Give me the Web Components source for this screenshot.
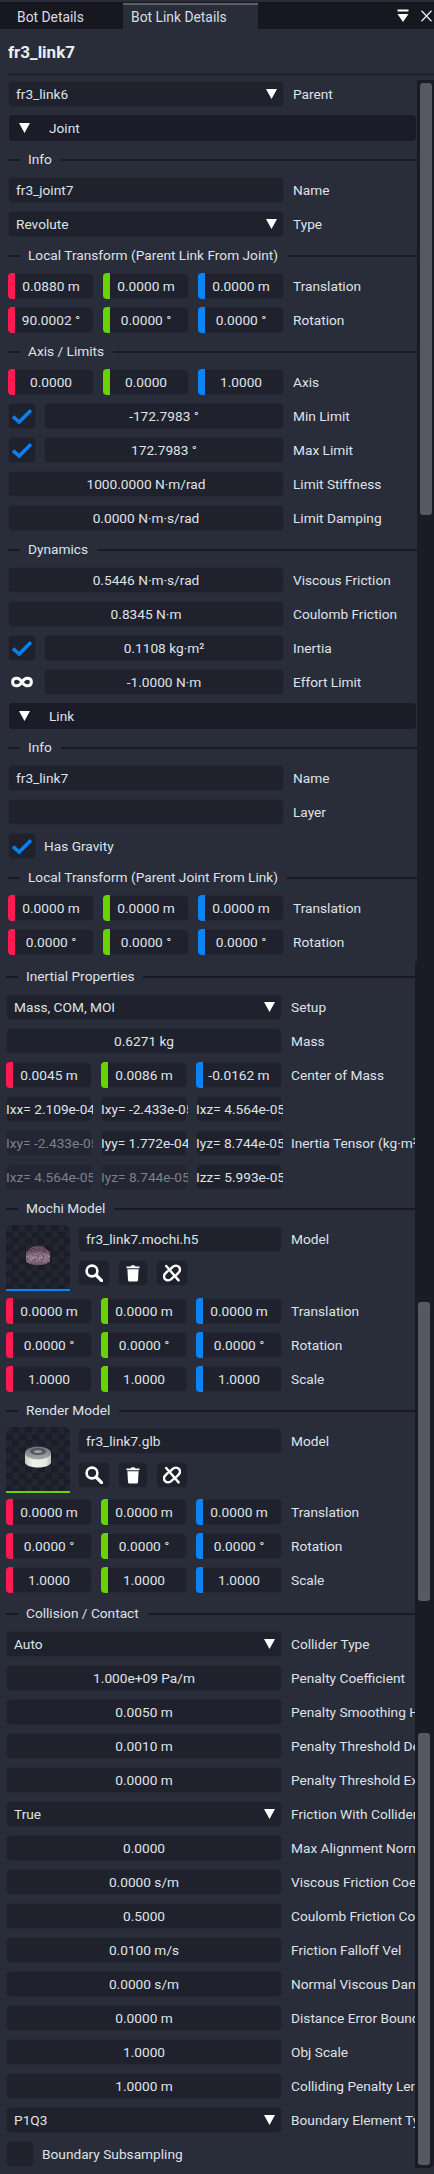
<!DOCTYPE html>
<html>
<head>
<meta charset="utf-8">
<title>Bot Link Details</title>
<style>
  html, body { margin: 0; padding: 0; background: #292c39; }
  body { width: 434px; height: 2174px; overflow: hidden; font-family: Roboto, "Liberation Sans", sans-serif; font-size: 13.7px; color: #dfe2e8; }
</style>
</head>
<body>
<bot-tabs></bot-tabs>
<bot-title>fr3_link7</bot-title>

<bot-pane left="8" track="17" thumbs="3:432" top="1" height="882">
  <bot-row label="Parent"><bot-select>fr3_link6</bot-select></bot-row>
  <bot-fold>Joint</bot-fold>
  <bot-section>Info</bot-section>
  <bot-row label="Name"><bot-field left>fr3_joint7</bot-field></bot-row>
  <bot-row label="Type"><bot-select>Revolute</bot-select></bot-row>
  <bot-section>Local Transform (Parent Link From Joint)</bot-section>
  <bot-row label="Translation"><bot-vec values="0.0880 m|0.0000 m|0.0000 m"></bot-vec></bot-row>
  <bot-row label="Rotation"><bot-vec values="90.0002 °|0.0000 °|0.0000 °"></bot-vec></bot-row>
  <bot-section>Axis / Limits</bot-section>
  <bot-row label="Axis"><bot-vec values="0.0000|0.0000|1.0000"></bot-vec></bot-row>
  <bot-row label="Min Limit"><bot-check checked>-172.7983 °</bot-check></bot-row>
  <bot-row label="Max Limit"><bot-check checked>172.7983 °</bot-check></bot-row>
  <bot-row label="Limit Stiffness"><bot-field>1000.0000 N·m/rad</bot-field></bot-row>
  <bot-row label="Limit Damping"><bot-field>0.0000 N·m·s/rad</bot-field></bot-row>
  <bot-section>Dynamics</bot-section>
  <bot-row label="Viscous Friction"><bot-field>0.5446 N·m·s/rad</bot-field></bot-row>
  <bot-row label="Coulomb Friction"><bot-field>0.8345 N·m</bot-field></bot-row>
  <bot-row label="Inertia"><bot-check checked>0.1108 kg·m²</bot-check></bot-row>
  <bot-row label="Effort Limit"><bot-check infinite>-1.0000 N·m</bot-check></bot-row>
  <bot-fold>Link</bot-fold>
  <bot-section>Info</bot-section>
  <bot-row label="Name"><bot-field left>fr3_link7</bot-field></bot-row>
  <bot-row label="Layer"><bot-field left></bot-field></bot-row>
  <bot-toggle checked>Has Gravity</bot-toggle>
  <bot-section>Local Transform (Parent Joint From Link)</bot-section>
  <bot-row label="Translation"><bot-vec values="0.0000 m|0.0000 m|0.0000 m"></bot-vec></bot-row>
  <bot-row label="Rotation"><bot-vec values="0.0000 °|0.0000 °|0.0000 °"></bot-vec></bot-row>
</bot-pane>

<bot-pane left="6" track="19" thumbs="340:299,132:432" top="4" height="1206" last>
  <bot-section>Inertial Properties</bot-section>
  <bot-row label="Setup"><bot-select>Mass, COM, MOI</bot-select></bot-row>
  <bot-row label="Mass"><bot-field>0.6271 kg</bot-field></bot-row>
  <bot-row label="Center of Mass"><bot-vec values="0.0045 m|0.0086 m|-0.0162 m"></bot-vec></bot-row>
  <bot-row><bot-tensor values="Ixx= 2.109e-04|Ixy= -2.433e-05|Ixz= 4.564e-05"></bot-tensor></bot-row>
  <bot-row label="Inertia Tensor (kg·m²)"><bot-tensor dim="0" values="Ixy= -2.433e-05|Iyy= 1.772e-04|Iyz= 8.744e-05"></bot-tensor></bot-row>
  <bot-row><bot-tensor dim="0,1" values="Ixz= 4.564e-05|Iyz= 8.744e-05|Izz= 5.993e-05"></bot-tensor></bot-row>
  <bot-section>Mochi Model</bot-section>
  <bot-model file="fr3_link7.mochi.h5" kind="mochi"></bot-model>
  <bot-row label="Translation"><bot-vec values="0.0000 m|0.0000 m|0.0000 m"></bot-vec></bot-row>
  <bot-row label="Rotation"><bot-vec values="0.0000 °|0.0000 °|0.0000 °"></bot-vec></bot-row>
  <bot-row label="Scale"><bot-vec values="1.0000|1.0000|1.0000"></bot-vec></bot-row>
  <bot-section>Render Model</bot-section>
  <bot-model file="fr3_link7.glb" kind="render" style="margin-bottom:-1px"></bot-model>
  <bot-row label="Translation"><bot-vec values="0.0000 m|0.0000 m|0.0000 m"></bot-vec></bot-row>
  <bot-row label="Rotation"><bot-vec values="0.0000 °|0.0000 °|0.0000 °"></bot-vec></bot-row>
  <bot-row label="Scale"><bot-vec values="1.0000|1.0000|1.0000"></bot-vec></bot-row>
  <bot-section style="margin-top:2px">Collision / Contact</bot-section>
  <bot-row label="Collider Type"><bot-select>Auto</bot-select></bot-row>
  <bot-row label="Penalty Coefficient"><bot-field>1.000e+09 Pa/m</bot-field></bot-row>
  <bot-row label="Penalty Smoothing Half Width"><bot-field>0.0050 m</bot-field></bot-row>
  <bot-row label="Penalty Threshold Depth"><bot-field>0.0010 m</bot-field></bot-row>
  <bot-row label="Penalty Threshold Exit"><bot-field>0.0000 m</bot-field></bot-row>
  <bot-row label="Friction With Collider"><bot-select>True</bot-select></bot-row>
  <bot-row label="Max Alignment Normal"><bot-field>0.0000</bot-field></bot-row>
  <bot-row label="Viscous Friction Coefficient"><bot-field>0.0000 s/m</bot-field></bot-row>
  <bot-row label="Coulomb Friction Coefficient"><bot-field>0.5000</bot-field></bot-row>
  <bot-row label="Friction Falloff Vel"><bot-field>0.0100 m/s</bot-field></bot-row>
  <bot-row label="Normal Viscous Damping"><bot-field>0.0000 s/m</bot-field></bot-row>
  <bot-row label="Distance Error Bound"><bot-field>0.0000 m</bot-field></bot-row>
  <bot-row label="Obj Scale"><bot-field>1.0000</bot-field></bot-row>
  <bot-row label="Colliding Penalty Length"><bot-field>1.0000 m</bot-field></bot-row>
  <bot-row label="Boundary Element Type"><bot-select>P1Q3</bot-select></bot-row>
  <bot-toggle>Boundary Subsampling</bot-toggle>
</bot-pane>

<script>
const FIELD_BG = '#1f222d';
const FIELD_EDGE = '#262936';

const ICON_CHECK = `<svg width="22" height="17" viewBox="0 0 22 17"><path d="M2 8.6 L8.2 14 L20 2.2" fill="none" stroke="#0a7ff0" stroke-width="3.6"/></svg>`;
const ICON_INF = `<svg width="22" height="12" viewBox="0 0 22 12"><path d="M6 2.2 C2.6 2.2 1.6 4.4 1.6 6 C1.6 7.6 2.6 9.8 6 9.8 C8.6 9.8 9.6 8 11 6 C12.4 4 13.4 2.2 16 2.2 C19.4 2.2 20.4 4.4 20.4 6 C20.4 7.6 19.4 9.8 16 9.8 C13.4 9.8 12.4 8 11 6 C9.6 4 8.6 2.2 6 2.2 Z" fill="none" stroke="#fff" stroke-width="3"/></svg>`;
const ICON_TRI = `<svg width="11" height="10" viewBox="0 0 11 10"><path d="M0 0 H11 L5.5 10 Z" fill="#fff"/></svg>`;

class BotTabs extends HTMLElement {
  constructor() {
    super();
    this.attachShadow({mode: 'open'}).innerHTML = `
      <style>
        :host { display: flex; height: 26px; padding-top: 3px; background: linear-gradient(#2b2c37 2px, #16171f 2px); font-size: 13.85px; position: relative; }
        .tab { box-sizing: border-box; color: #d9dce2; line-height: 24px; }
        .one { width: 123px; padding: 2px 0 0 17px; }
        .two { width: 135px; padding-left: 8px; background: #292c39; border-top: 2px solid #5d5f6a; }
        .tools { margin-left: auto; display: flex; align-items: flex-start; gap: 12px; padding: 6px 2px 0 0; }
        svg { display: block; }
      </style>
      <div class="tab one">Bot Details</div>
      <div class="tab two">Bot Link Details</div>
      <div class="tools">
        <svg width="12" height="14" viewBox="0 0 12 14"><path d="M0.5 0.5 H11.5 V2.6 H0.5 Z M0.5 5 H11.5 L6 13 Z" fill="#fff"/></svg>
        <svg width="11" height="12" viewBox="0 0 11 12" style="margin-top:1px"><path d="M0.5 0.8 L10.5 11.2 M10.5 0.8 L0.5 11.2" stroke="#e8e8ee" stroke-width="1.3" fill="none"/></svg>
      </div>`;
  }
}

class BotTitle extends HTMLElement {
  constructor() {
    super();
    this.attachShadow({mode: 'open'}).innerHTML = `
      <style>
        :host { display: block; box-sizing: border-box; height: 46px; margin: 0 0 5px 8px; border-bottom: 1px solid #181924; font-size: 17px; font-weight: 700; line-height: 46px; color: #eceef2; }
      </style><slot></slot>`;
  }
}

// one stretch of scrolled content with its scrollbar on the right
class BotPane extends HTMLElement {
  connectedCallback() {
    const left = this.getAttribute('left');
    const track = this.getAttribute('track');
    const top = this.getAttribute('top');
    const thumbs = this.getAttribute('thumbs').split(',').map(t => {
      const [gap, h] = t.split(':');
      return `<div class="thumb" style="margin-top:${gap}px;height:${h}px"></div>`;
    }).join('');
    const corner = this.hasAttribute('last') ? 'border-radius: 0 0 5px 0;' : '';
    this.attachShadow({mode: 'open'}).innerHTML = `
      <style>
        :host { display: flex; height: ${this.getAttribute('height')}px; padding-left: ${left}px; }
        .body { flex: 1; min-width: 0; box-sizing: border-box; padding-top: ${top}px; display: flex; flex-direction: column; gap: 8px; overflow: hidden; }
        .track { width: ${track}px; flex: none; background: #1a1b25; box-sizing: border-box; padding-left: 3px; ${corner} }
        .thumb { width: 12px; background: #565862; border-radius: 3px; }
      </style>
      <div class="body"><slot></slot></div>
      <div class="track">${thumbs}</div>`;
  }
}

class BotRow extends HTMLElement {
  connectedCallback() {
    const label = this.getAttribute('label') || '';
    this.attachShadow({mode: 'open'}).innerHTML = `
      <style>
        :host { display: grid; grid-template-columns: 276px 1fr; column-gap: 9px; height: 26px; line-height: 26px; }
        .label { white-space: nowrap; overflow: hidden; color: #dfe2e8; }
      </style>
      <slot></slot><div class="label">${label}</div>`;
  }
}

class BotSection extends HTMLElement {
  constructor() {
    super();
    this.attachShadow({mode: 'open'}).innerHTML = `
      <style>
        :host { display: flex; align-items: center; height: 20px; color: #dfe2e8; line-height: 20px; white-space: nowrap; }
        .line { height: 2px; margin-top: 2px; background: #191a25; }
        .a { width: 12px; margin-right: 8px; flex: none; }
        .b { flex: 1; margin-left: 9px; }
      </style>
      <div class="line a"></div><slot></slot><div class="line b"></div>`;
  }
}

class BotFold extends HTMLElement {
  constructor() {
    super();
    this.attachShadow({mode: 'open'}).innerHTML = `
      <style>
        :host { display: flex; align-items: center; box-sizing: border-box; height: 26px; margin: 0 1px; padding-left: 10px; background: #1b1c27; border-radius: 4px; }
        svg { display: block; margin-right: 19px; margin-top: -1px; }
      </style>${ICON_TRI}<slot></slot>`;
  }
}

class BotField extends HTMLElement {
  constructor() {
    super();
    this.attachShadow({mode: 'open'}).innerHTML = `
      <style>
        :host { display: block; box-sizing: border-box; height: 26px; background: ${FIELD_BG}; border: 1px solid ${FIELD_EDGE}; border-radius: 5px; line-height: 24px; text-align: center; white-space: nowrap; color: #dfe2e8; }
        :host([left]) { text-align: left; padding-left: 7px; }
      </style><slot></slot>`;
  }
}

class BotSelect extends HTMLElement {
  constructor() {
    super();
    this.attachShadow({mode: 'open'}).innerHTML = `
      <style>
        :host { display: flex; align-items: center; justify-content: space-between; box-sizing: border-box; height: 26px; padding: 0 6px 0 7px; background: ${FIELD_BG}; border: 1px solid ${FIELD_EDGE}; border-radius: 5px; color: #dfe2e8; }
        svg { display: block; margin-top: -1px; }
      </style><slot></slot>${ICON_TRI}`;
  }
}

class BotVec extends HTMLElement {
  connectedCallback() {
    const colors = ['#ff1a4f', '#66d400', '#0a84f5'];
    const cells = this.getAttribute('values').split('|').map((v, i) =>
      `<div class="cell"><i style="background:${colors[i]}"></i>${v}</div>`).join('');
    this.attachShadow({mode: 'open'}).innerHTML = `
      <style>
        :host { display: flex; gap: 9px; }
        .cell { position: relative; flex: 1; box-sizing: border-box; height: 26px; background: ${FIELD_BG}; border: 1px solid ${FIELD_EDGE}; border-radius: 5px; line-height: 24px; text-align: center; white-space: nowrap; }
        i { position: absolute; left: -1px; top: -1px; bottom: -1px; width: 7px; border-radius: 4px 0 0 4px; }
      </style>${cells}`;
  }
}

class BotTensor extends HTMLElement {
  connectedCallback() {
    const dim = (this.getAttribute('dim') || '').split(',');
    const cells = this.getAttribute('values').split('|').map((v, i) =>
      `<div class="cell${dim.includes(String(i)) ? ' off' : ''}"><span>${v}</span></div>`).join('');
    this.attachShadow({mode: 'open'}).innerHTML = `
      <style>
        :host { display: flex; gap: 9px; }
        .cell { flex: 1; min-width: 0; box-sizing: border-box; height: 26px; background: ${FIELD_BG}; border: 1px solid ${FIELD_EDGE}; border-radius: 5px; line-height: 24px; white-space: nowrap; overflow: clip; overflow-clip-margin: 2px; text-indent: -1px; }
        .off { background: #232632; color: #7d808a; }
      </style>${cells}`;
  }
}

class BotCheck extends HTMLElement {
  connectedCallback() {
    const inf = this.hasAttribute('infinite');
    this.attachShadow({mode: 'open'}).innerHTML = `
      <style>
        :host { display: flex; gap: 8px; height: 26px; }
        .box { width: 28px; height: 26px; box-sizing: border-box; flex: none; display: flex; align-items: center; justify-content: center; border-radius: 5px; }
        .box.on { background: ${FIELD_BG}; border: 1px solid ${FIELD_EDGE}; }
        .val { flex: 1; box-sizing: border-box; background: ${FIELD_BG}; border: 1px solid ${FIELD_EDGE}; border-radius: 5px; line-height: 24px; text-align: center; }
        svg { display: block; }
      </style>
      <div class="box ${inf ? '' : 'on'}">${inf ? ICON_INF : ICON_CHECK}</div>
      <div class="val"><slot></slot></div>`;
  }
}

class BotToggle extends HTMLElement {
  connectedCallback() {
    const on = this.hasAttribute('checked');
    this.attachShadow({mode: 'open'}).innerHTML = `
      <style>
        :host { display: flex; align-items: center; gap: 8px; height: 26px; }
        .box { width: 28px; height: 26px; box-sizing: border-box; background: ${FIELD_BG}; border: 1px solid ${FIELD_EDGE}; border-radius: 5px; display: flex; align-items: center; justify-content: center; }
        svg { display: block; }
      </style>
      <div class="box">${on ? ICON_CHECK : ''}</div><slot></slot>`;
  }
}

class BotModel extends HTMLElement {
  connectedCallback() {
    const kind = this.getAttribute('kind');
    const art = kind === 'mochi' ? `
      <svg class="art" width="26" height="22" viewBox="0 0 26 22">
        <defs>
          <filter id="grain" x="0" y="0" width="100%" height="100%">
            <feTurbulence type="fractalNoise" baseFrequency="0.5 0.95" numOctaves="2" seed="4"/>
            <feColorMatrix values="0 0 0 0 0.16  0 0 0 0 0.09  0 0 0 0 0.14  2.6 0 0 0 -0.7"/>
            <feComposite in2="SourceGraphic" operator="in"/>
            <feMerge><feMergeNode in="SourceGraphic"/><feMergeNode/></feMerge>
          </filter>
          <linearGradient id="mb" x1="0" y1="0" x2="0" y2="1"><stop offset="0" stop-color="#7d6474"/><stop offset=".5" stop-color="#c0a6b3"/><stop offset="1" stop-color="#66525f"/></linearGradient>
        </defs>
        <g filter="url(#grain)">
          <path d="M5 5 C7 0.5 19 0.5 21 5 L25 8 V10 H1 V8 Z" fill="#4f3c47"/>
          <path d="M1 9 C7 7 19 7 25 9 V17 C21 22.5 5 22.5 1 17 Z" fill="url(#mb)"/>
        </g>
      </svg>` : `
      <svg class="art" width="28" height="24" viewBox="0 0 28 24">
        <defs>
          <linearGradient id="rb" x1="0" y1="0" x2="1" y2="0"><stop offset="0" stop-color="#c9c9c4"/><stop offset=".3" stop-color="#f1f1ec"/><stop offset=".8" stop-color="#e8e8e3"/><stop offset="1" stop-color="#bcbcb8"/></linearGradient>
          <linearGradient id="rt" x1="0" y1="0" x2="0" y2="1"><stop offset="0" stop-color="#6e7177"/><stop offset="1" stop-color="#a6a8aa"/></linearGradient>
        </defs>
        <path d="M1 9 V18 C4 24 24 24 27 18 V9 Z" fill="url(#rb)"/>
        <ellipse cx="14" cy="8" rx="13" ry="6.5" fill="url(#rt)"/>
        <ellipse cx="14" cy="6.5" rx="8" ry="3.4" fill="#54575e"/>
        <ellipse cx="14" cy="6.5" rx="4" ry="1.6" fill="#9a9ca0"/>
      </svg>`;
    this.attachShadow({mode: 'open'}).innerHTML = `
      <style>
        :host { display: grid; grid-template-columns: 64px 204px 1fr; grid-template-rows: 26px 26px; column-gap: 8px; row-gap: 8px; height: 64px; }
        .thumb { grid-row: 1 / 3; height: 66px; margin-top: -1px; box-sizing: border-box; border-radius: 6px 6px 0 0; border-bottom: 2px solid ${kind === 'mochi' ? '#0a84f5' : '#66d400'}; display: flex; align-items: center; justify-content: center;
          background: repeating-conic-gradient(#1b1e28 0 25%, #232631 0 50%) 0 0 / 13px 13px; }
        .art { display: block; margin-top: -5px; }
        .file { box-sizing: border-box; background: ${FIELD_BG}; border: 1px solid ${FIELD_EDGE}; border-radius: 5px; line-height: 24px; padding-left: 7px; white-space: nowrap; }
        .name { line-height: 26px; margin-left: 1px; }
        .btns { grid-column: 2; display: flex; gap: 8px; }
        .btn { box-sizing: border-box; width: 32px; height: 26px; background: ${FIELD_BG}; border: 1px solid ${FIELD_EDGE}; border-radius: 5px; display: flex; align-items: center; justify-content: center; }
        .btn.t { width: 30px; }
        svg.i { display: block; }
      </style>
      <div class="thumb">${art}</div>
      <div class="file">${this.getAttribute('file')}</div>
      <div class="name">Model</div>
      <div class="btns">
        <div class="btn"><svg class="i" width="18" height="18" viewBox="0 0 18 18"><circle cx="7" cy="7" r="5.4" fill="none" stroke="#fff" stroke-width="2.6"/><path d="M11 11 L16.6 16.6" stroke="#fff" stroke-width="3.2" stroke-linecap="round"/></svg></div>
        <div class="btn t"><svg class="i" width="16" height="18" viewBox="0 0 16 18"><path d="M1.5 2.6 H14.5 V4.2 H1.5 Z M5.6 2.6 C5.6 0.8 10.4 0.8 10.4 2.6 Z" fill="#fff"/><path d="M2.4 5.2 H13.6 L13 16 C12.9 17 12.2 17.6 11.4 17.6 H4.6 C3.8 17.6 3.1 17 3 16 Z" fill="#fff"/></svg></div>
        <div class="btn"><svg class="i" width="18" height="18" viewBox="0 0 18 18"><path d="M7.5 5 L9.8 2.9 C11.6 1.2 14.4 1.4 15.9 2.9 C17.4 4.6 17.2 7 15.6 8.6 L13.4 10.8 M10.5 13 L8.2 15.2 C6.4 16.8 3.6 16.6 2.1 15.1 C0.6 13.4 0.8 11 2.4 9.4 L4.6 7.2 M3.2 2 L15.6 16.4" fill="none" stroke="#fff" stroke-width="2.4" stroke-linecap="round"/></svg></div>
      </div>`;
  }
}

customElements.define('bot-tabs', BotTabs);
customElements.define('bot-title', BotTitle);
customElements.define('bot-pane', BotPane);
customElements.define('bot-row', BotRow);
customElements.define('bot-section', BotSection);
customElements.define('bot-fold', BotFold);
customElements.define('bot-field', BotField);
customElements.define('bot-select', BotSelect);
customElements.define('bot-vec', BotVec);
customElements.define('bot-tensor', BotTensor);
customElements.define('bot-check', BotCheck);
customElements.define('bot-toggle', BotToggle);
customElements.define('bot-model', BotModel);
</script>
</body>
</html>
